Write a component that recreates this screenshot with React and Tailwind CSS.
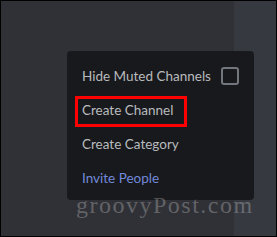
export default function App() {
  const items = [
    { label: 'Hide Muted Channels', check: true },
    { label: 'Create Channel' },
    { label: 'Create Category' },
    { label: 'Invite People', blue: true },
  ];

  return (
    <div className="relative w-[277px] h-[237px] border border-black flex overflow-hidden" style={{ fontFamily: 'Lato, "Noto Sans", sans-serif' }}>
      {/* fond: colonne gauche + colonne droite */}
      <div className="w-[233px] h-full bg-[#2f3136]" />
      <div className="flex-1 h-full bg-[#36393f]" />

      {/* menu contextuel */}
      <div className="absolute left-[66px] top-[50px] w-[187px] h-[149px] bg-[#18191c] rounded-[4px] pt-[8px] px-[15px]">
        {items.map((item) => (
          <div key={item.label} className="h-[34px] flex items-center justify-between">
            <span className={`text-[13.5px] whitespace-nowrap ${item.blue ? 'text-[#7289da]' : 'text-[#b9bbbe]'}`}>
              {item.label}
            </span>
            {item.check && <span className="shrink-0 w-[18px] h-[18px] border-2 border-[#72767d] rounded-[3px]" />}
          </div>
        ))}
        {/* cadre rouge autour de "Create Channel" */}
        <div className="absolute left-[8px] top-[45px] w-[112px] h-[31px] border-[3px] border-[#ff0000]" />
      </div>

      {/* filigrane */}
      <div className="absolute left-[75px] top-[190px] text-[24px] leading-[28px] tracking-[1.5px] text-white/25" style={{ fontFamily: '"Liberation Serif", serif' }}>
        groovyPost.com
      </div>
    </div>
  );
}
